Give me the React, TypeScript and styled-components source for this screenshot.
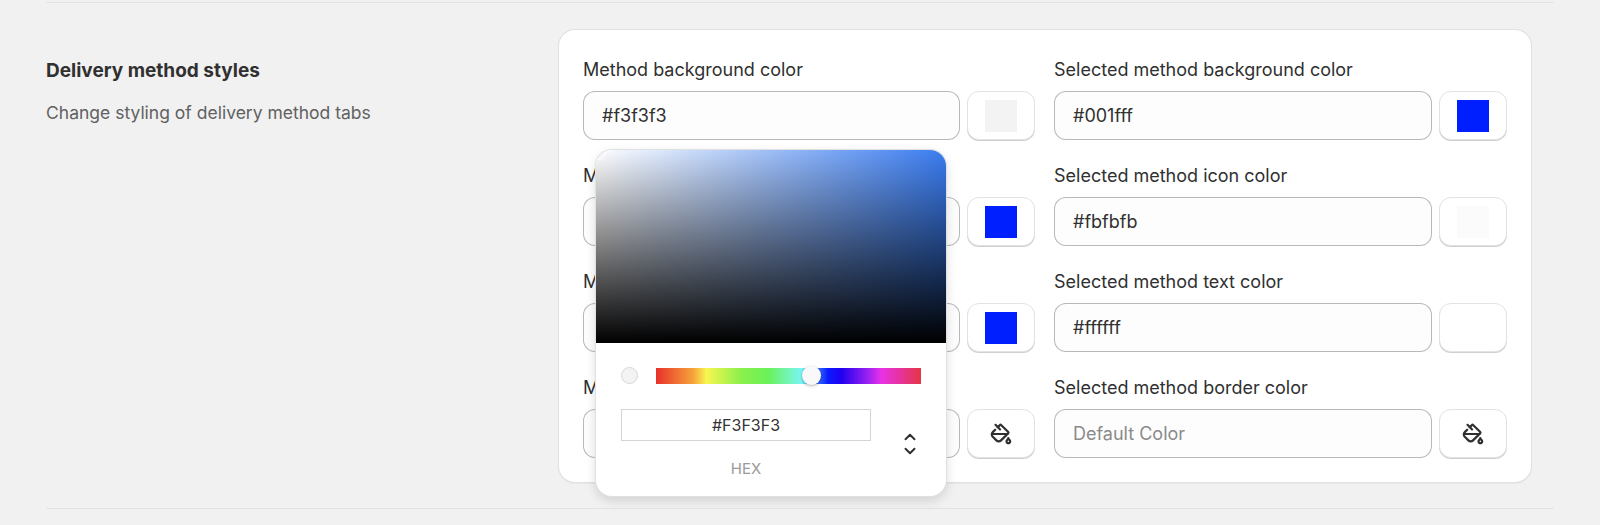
import React from "react";
import styled, { createGlobalStyle } from "styled-components";
import { PaintBucket, ChevronUp, ChevronDown } from "lucide-react";

const Global = createGlobalStyle`
  html, body { overflow: hidden; }
  body { margin: 0; background: #f1f1f1; font-family: Inter, "Liberation Sans", sans-serif; color: #303030; }
`;

interface Field {
  label: string;
  value: string;
  swatch?: string;
}

const left: Field[] = [
  { label: "Method background color", value: "#f3f3f3", swatch: "#f3f3f3" },
  { label: "Method icon color", value: "#001fff", swatch: "#001fff" },
  { label: "Method text color", value: "#001fff", swatch: "#001fff" },
  { label: "Method border color", value: "" },
];

const right: Field[] = [
  { label: "Selected method background color", value: "#001fff", swatch: "#001fff" },
  { label: "Selected method icon color", value: "#fbfbfb", swatch: "#fbfbfb" },
  { label: "Selected method text color", value: "#ffffff", swatch: "#ffffff" },
  { label: "Selected method border color", value: "" },
];

const FieldBlock = ({ f }: { f: Field }) => (
  <FieldWrap>
    <Label>{f.label}</Label>
    <InputRow>
      <TextInput $empty={!f.value}>{f.value || "Default Color"}</TextInput>
      <SwatchButton>
        {f.swatch ? <Swatch $color={f.swatch} /> : <PaintBucket size={22} strokeWidth={2.4} color="#303030" />}
      </SwatchButton>
    </InputRow>
  </FieldWrap>
);

export default function App() {
  return (
    <>
      <Global />
      <Page>
        <Section>
          <Intro>
            <Heading>Delivery method styles</Heading>
            <Sub>Change styling of delivery method tabs</Sub>
          </Intro>
          <Card>
            <Column>{left.map((f) => <FieldBlock key={f.label} f={f} />)}</Column>
            <Column>{right.map((f) => <FieldBlock key={f.label} f={f} />)}</Column>
            <Picker>
              <SatArea>
                <SatCursor />
              </SatArea>
              <Controls>
                <HueRow>
                  <Preview />
                  <HueBar>
                    <HueThumb />
                  </HueBar>
                </HueRow>
                <HexRow>
                  <HexCol>
                    <HexInput>#F3F3F3</HexInput>
                    <HexLabel>HEX</HexLabel>
                  </HexCol>
                  <Arrows>
                    <ChevronUp size={18} strokeWidth={2.6} />
                    <ChevronDown size={18} strokeWidth={2.6} />
                  </Arrows>
                </HexRow>
              </Controls>
            </Picker>
          </Card>
        </Section>
      </Page>
    </>
  );
}

const Page = styled.div`
  padding: 2px 0 0;
  height: 525px;
  box-sizing: border-box;
`;

const Section = styled.div`
  display: flex;
  margin: 0 46px;
  padding: 27px 0 26px;
  border-top: 1px solid #e3e3e3;
  border-bottom: 1px solid #e3e3e3;
`;

const Intro = styled.div`
  width: 513px;
  flex-shrink: 0;
  padding-top: 29px;
`;

const Heading = styled.div`
  font-size: 19px;
  font-weight: 700;
  color: #303030;
`;

const Sub = styled.div`
  margin-top: 20px;
  font-size: 17.5px;
  color: #616161;
`;

const Card = styled.div`
  position: relative;
  width: 972px;
  flex-shrink: 0;
  background: #fff;
  border-radius: 16px;
  box-shadow: 0 0 0 1px #e1e1e1, 0 1px 2px rgba(0, 0, 0, 0.12);
  padding: 28px 24px 24px;
  box-sizing: border-box;
  display: grid;
  grid-template-columns: 452px 453px;
  column-gap: 19px;
`;

const Column = styled.div`
  display: flex;
  flex-direction: column;
  gap: 24px;
`;

const FieldWrap = styled.div`
  display: flex;
  flex-direction: column;
  gap: 9px;
`;

const Label = styled.div`
  font-size: 18px;
  line-height: 24px;
  color: #303030;
`;

const InputRow = styled.div`
  display: flex;
  gap: 7px;
`;

const TextInput = styled.div<{ $empty: boolean }>`
  flex: 1;
  height: 49px;
  box-sizing: border-box;
  border: 1px solid #8a8a8a99;
  border-radius: 12px;
  background: #fdfdfd;
  padding: 0 18px;
  display: flex;
  align-items: center;
  font-size: 18px;
  color: ${(p) => (p.$empty ? "#8a8a8a" : "#303030")};
`;

const SwatchButton = styled.div`
  width: 68px;
  height: 49px;
  box-sizing: border-box;
  border-radius: 12px;
  border: 1px solid #e3e3e3;
  box-shadow: 0 1px 0 #cfcfcf;
  background: #fff;
  display: flex;
  align-items: center;
  justify-content: center;
`;

const Swatch = styled.div<{ $color: string }>`
  width: 32px;
  height: 32px;
  background: ${(p) => p.$color};
`;

const Picker = styled.div`
  position: absolute;
  left: 37px;
  top: 120px;
  width: 350px;
  height: 346px;
  background: #fff;
  border-radius: 16px;
  box-shadow: 0 0 0 1px #e0e0e0, 0 4px 12px rgba(0, 0, 0, 0.15);
  overflow: hidden;
  display: flex;
  flex-direction: column;
`;

const SatArea = styled.div`
  position: relative;
  height: 193px;
  background: linear-gradient(to top, #000, rgba(0, 0, 0, 0)),
    linear-gradient(to right, #fff, #3a7cf0);
`;

const SatCursor = styled.div`
  position: absolute;
  left: -6px;
  top: -6px;
  width: 14px;
  height: 14px;
  border-radius: 50%;
  border: 1.5px solid #fff;
`;

const Controls = styled.div`
  padding: 24px 25px 0 25px;
`;

const HueRow = styled.div`
  display: flex;
  align-items: center;
  gap: 18px;
`;

const Preview = styled.div`
  width: 15px;
  height: 15px;
  border-radius: 50%;
  background: #f3f3f3;
  border: 1px solid #d8d8d8;
`;

const HueBar = styled.div`
  position: relative;
  flex: 1;
  height: 16px;
  background: linear-gradient(to right, #e8312b, #f5a33a 14%, #f7f64f 19%, #8cf04d 32%, #6af257 42%, #7af5f5 55%, #0a1aff 65%, #2200f0 70%, #9a22f0 80%, #e832e8 85%, #e63546);
`;

const HueThumb = styled.div`
  position: absolute;
  left: 146px;
  top: -2px;
  width: 19px;
  height: 19px;
  border-radius: 50%;
  background: #f9f9f9;
  box-shadow: 0 1px 3px rgba(0, 0, 0, 0.3);
`;

const HexRow = styled.div`
  display: flex;
  margin-top: 25px;
`;

const HexCol = styled.div`
  display: flex;
  flex-direction: column;
  align-items: center;
  width: 250px;
`;

const HexInput = styled.div`
  width: 250px;
  height: 32px;
  box-sizing: border-box;
  border: 1px solid #d4d4d4;
  display: flex;
  align-items: center;
  justify-content: center;
  font-size: 16px;
  color: #333;
`;

const HexLabel = styled.div`
  margin-top: 18px;
  font-size: 15px;
  color: #9a9a9a;
`;

const Arrows = styled.div`
  display: flex;
  flex-direction: column;
  margin: 21px 0 0 30px;
  color: #303030;
  & > svg { margin: -2px 0; }
`;
